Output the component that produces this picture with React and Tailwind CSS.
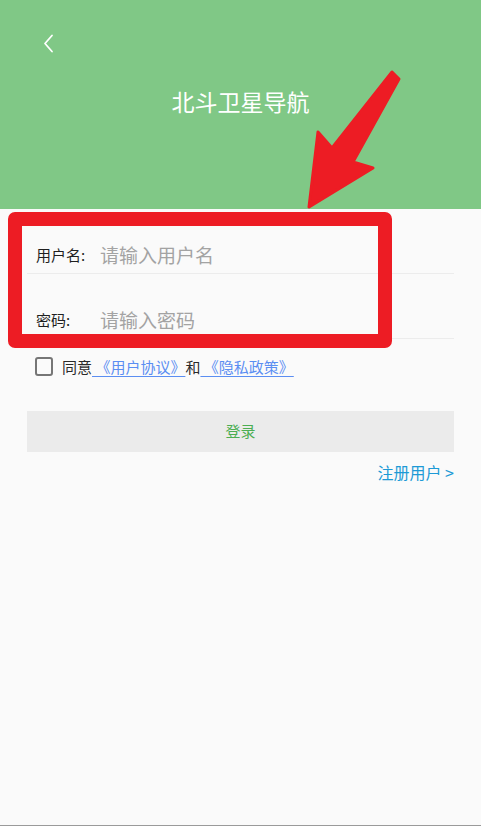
import React from 'react';

const font = { fontFamily: '"Noto Sans CJK SC", "Noto Sans", sans-serif' };

const Field = ({ label, placeholder }) => (
  <div className="flex items-end h-[65px] pb-[7px] pl-[9px] border-b border-[#ececec]">
    <span className="w-[64px] text-[15px] leading-[22px] text-[#1f1f1f]">{label}</span>
    <input
      className="flex-1 bg-transparent outline-none text-[19px] leading-[22px] text-[#333] placeholder:text-[#a3a3a3]"
      style={font}
      placeholder={placeholder}
    />
  </div>
);

const App = () => {
  return (
    <div className="relative w-[481px] h-[826px] overflow-hidden bg-[#fafafa]" style={font}>
      <div className="h-[209px] bg-[#80c886] pt-[33px]">
        <button className="ml-[40px] w-[16px] h-[20px] flex items-center justify-center">
          <svg width="12" height="19" viewBox="0 0 12 19" fill="none">
            <path d="M10 1.5 L3 9.5 L10 17.5" stroke="#ffffff" strokeWidth="1.8" strokeLinecap="round" strokeLinejoin="round" />
          </svg>
        </button>
        <h1 className="mt-[32px] text-center text-white text-[23px] leading-[32px] font-normal">北斗卫星导航</h1>
      </div>

      <div className="mx-[27px]">
        <Field label="用户名:" placeholder="请输入用户名" />
        <Field label="密码:" placeholder="请输入密码" />

        <div className="flex items-center mt-[18px] pl-[8px] h-[19px]">
          <span className="w-[18px] h-[19px] border-2 border-[#767676] rounded-[3px]" />
          <span className="ml-[9px] text-[15px] leading-[20px] text-[#2a2a2a]">
            同意
            <a className="text-[#5b8ef2] underline underline-offset-[3px] decoration-1"> 《用户协议》</a>
            和
            <a className="text-[#5b8ef2] underline underline-offset-[3px] decoration-1"> 《隐私政策》</a>
          </span>
        </div>

        <button className="mt-[35px] w-full h-[41px] bg-[#ebebeb] text-[#4cae52] text-[15px]">登录</button>

        <div className="mt-[9px] flex justify-end">
          <span className="text-[16px] leading-[22px] text-[#1d9ad6]">注册用户 &gt;</span>
        </div>
      </div>

      <div className="absolute left-0 right-0 bottom-0 h-px bg-[#9a9a9a]" />

      {/* annotation overlay */}
      <div className="absolute left-[8px] top-[212px] w-[384px] h-[136px] border-[14px] border-[#ed1c24] rounded-[7px]" />
      <svg className="absolute left-0 top-0" width="481" height="826" viewBox="0 0 481 826">
        <polygon
          points="392,72 399,79 353,162 373,168 309,207 318,132 332,148"
          fill="#ed1c24"
          stroke="#ed1c24"
          strokeWidth="3"
          strokeLinejoin="round"
        />
      </svg>
    </div>
  );
};

export default App;
